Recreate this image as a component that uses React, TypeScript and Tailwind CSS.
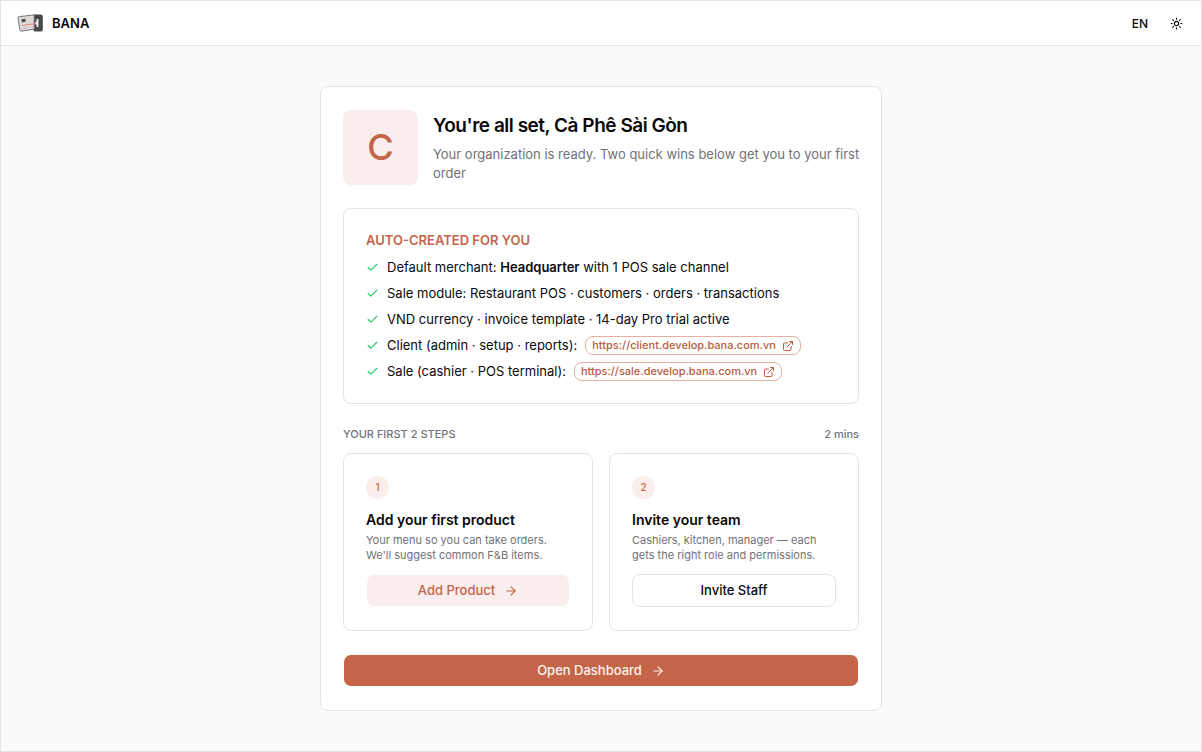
import type { ReactNode } from "react";
import { ArrowRight, Check, ExternalLink, Sun } from "lucide-react";

function Logo() {
  return (
    <svg viewBox="0 0 26 20" className="h-5 w-[26px]" aria-hidden="true">
      <path d="M17 1.4h6.6A2.2 2.2 0 0 1 25.8 3.6v12.8a2.2 2.2 0 0 1-2.2 2.2h-6.2l-1.6-2.4z" fill="#494949" />
      <path d="M2.2 3.6 17.2 1.9v14.2L4.6 18.2a1.5 1.5 0 0 1-1.7-1.3L1 5.1a1.3 1.3 0 0 1 1.2-1.5z" fill="#dbdad9" stroke="#6b6b6b" strokeWidth="0.9" />
      <path d="m4.4 6.3 3.8-.5.5 3-3.8.5z" fill="#4a4a4a" />
      <path d="m5 12.3 15.4-1.8" stroke="#e9897e" strokeWidth="1" />
      <path d="m5.4 15.6 4.6-.7" stroke="#bcbcbc" strokeWidth="0.7" />
      <path d="M19.6 6h1.8v8h-1.8v-2.6h-1V8.6h1z" fill="#f6f6f6" />
    </svg>
  );
}

function ListRow({ children }: { children: ReactNode }) {
  return (
    <li className="flex items-center gap-2">
      <Check className="size-[13px] shrink-0 text-[#22c55e]" strokeWidth={2} />
      <span className="flex flex-wrap items-center gap-x-2">{children}</span>
    </li>
  );
}

function SiteLink({ href }: { href: string }) {
  return (
    <a
      href={href}
      className="flex h-[19px] items-center gap-[6px] rounded-lg border border-[#e3b0a1] px-[6px] text-[11px] leading-[15px] font-medium text-[#b95c41]"
    >
      {href}
      <ExternalLink className="size-3" strokeWidth={2} />
    </a>
  );
}

function StepCard({ step, title, text, children }: { step: number; title: string; text: string; children: ReactNode }) {
  return (
    <section className="flex flex-col rounded-lg border border-[#e4e4e7] px-[22px] pt-[22px] pb-[23px]">
      <span className="flex size-[23px] items-center justify-center rounded-full bg-[#f9eeec] text-[10px] font-medium text-[#c4654a]">
        {step}
      </span>
      <h2 className="mt-[11px] text-[14px] leading-[19px] font-semibold">{title}</h2>
      <p className="mt-1 mb-[11px] text-[11px] leading-[15px] text-[#71717a]">{text}</p>
      {children}
    </section>
  );
}

const buttonBase =
  "flex h-[33px] w-full items-center justify-center gap-[9px] rounded-lg border bg-clip-padding text-[13px] leading-[19px] font-medium";

export default function App() {
  return (
    <div className="flex min-h-screen flex-col border border-[#e4e4e7] bg-[#fafafa] font-['Inter',sans-serif] text-[13px] leading-[19px] text-[#09090b]">
      <header className="flex h-[45px] items-center justify-between border-b border-[#e4e4e7] bg-white px-4">
        <a href="#home" className="flex items-center gap-[9px] text-[13px] font-semibold">
          <Logo />
          BANA
        </a>
        <div className="flex items-center gap-[22px]">
          <button type="button" className="text-[12px] font-medium">EN</button>
          <button type="button" aria-label="Toggle theme" className="pr-[2px]">
            <Sun className="size-[13px]" strokeWidth={2} />
          </button>
        </div>
      </header>

      <main className="mx-auto mt-10 mb-10 w-full max-w-[562px] rounded-lg border border-[#e4e4e7] bg-white px-[22px] py-[23px]">
        <div className="flex gap-[15px]">
          <div className="flex size-[75px] shrink-0 items-center justify-center rounded-lg bg-[#f9eeed] text-[36px] font-medium text-[#c4654a]">
            C
          </div>
          <div className="-mr-1 pt-1">
            <h1 className="text-[19px] leading-6 font-semibold tracking-tight">You're all set, Cà Phê Sài Gòn</h1>
            <p className="mt-[7px] text-[#71717a]">
              Your organization is ready. Two quick wins below get you to your first order
            </p>
          </div>
        </div>

        <section className="mt-[23px] rounded-lg border border-[#e4e4e7] px-[22px] py-[22px]">
          <h2 className="font-semibold text-[#c4654a]">AUTO-CREATED FOR YOU</h2>
          <ul className="mt-2 flex flex-col gap-[7px]">
            <ListRow>
              <span>
                Default merchant: <strong className="font-semibold">Headquarter</strong> with 1 POS sale channel
              </span>
            </ListRow>
            <ListRow>Sale module: Restaurant POS · customers · orders · transactions</ListRow>
            <ListRow>VND currency · invoice template · 14-day Pro trial active</ListRow>
            <ListRow>
              Client (admin · setup · reports): <SiteLink href="https://client.develop.bana.com.vn" />
            </ListRow>
            <ListRow>
              Sale (cashier · POS terminal): <SiteLink href="https://sale.develop.bana.com.vn" />
            </ListRow>
          </ul>
        </section>

        <div className="mt-[23px] flex justify-between text-[11px] leading-[15px] font-medium text-[#71717a]">
          <span>YOUR FIRST 2 STEPS</span>
          <span>2 mins</span>
        </div>

        <div className="mt-[11px] grid grid-cols-1 gap-4 sm:grid-cols-2">
          <StepCard step={1} title="Add your first product" text="Your menu so you can take orders. We'll suggest common F&B items.">
            <button type="button" className={buttonBase + " border-transparent bg-[#f9eeed] text-[#c4654a]"}>
              Add Product
              <ArrowRight className="size-[14px]" strokeWidth={2} />
            </button>
          </StepCard>
          <StepCard step={2} title="Invite your team" text="Cashiers, kitchen, manager — each gets the right role and permissions.">
            <button type="button" className={buttonBase + " border-[#e4e4e7] bg-white"}>
              Invite Staff
            </button>
          </StepCard>
        </div>

        <button type="button" className={buttonBase + " mt-[23px] border-transparent bg-[#c4654a] text-[#fdf3ee]"}>
          Open Dashboard
          <ArrowRight className="size-[14px]" strokeWidth={2} />
        </button>
      </main>
    </div>
  );
}
